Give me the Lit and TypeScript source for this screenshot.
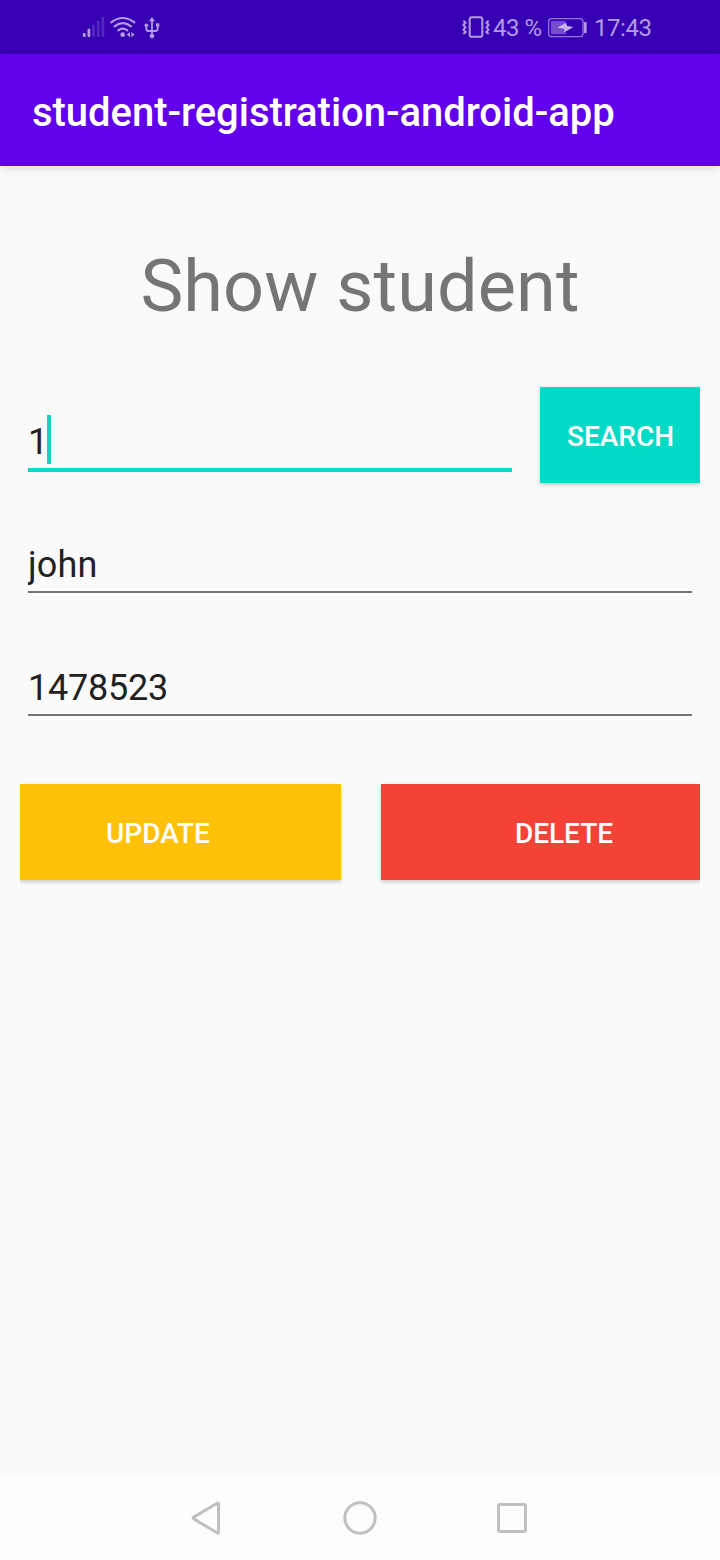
import { LitElement, html, css, svg } from "lit";
import { customElement, property, state } from "lit/decorators.js";
import { classMap } from "lit/directives/class-map.js";

@customElement("status-bar")
class StatusBar extends LitElement {
  static styles = css`
    :host {
      display: flex;
      justify-content: space-between;
      align-items: center;
      height: 54px;
      box-sizing: border-box;
      padding: 2px 68px 0 75px;
      background: #3700b3;
      color: #b49ae3;
      font-size: 24px;
      line-height: 54px;
      letter-spacing: -0.45px;
    }
    svg {
      display: block;
      flex: none;
    }
    .right {
      display: flex;
      align-items: center;
    }
    .percent {
      width: 55px;
      white-space: nowrap;
    }
    .time {
      width: 58px;
      white-space: nowrap;
    }
  `;

  render() {
    return html`
      <svg width="95" height="40" viewBox="0 0 285 120" fill="none">
        <g fill="#b49ae3">
          <rect x="23.500" y="75" width="8.500" height="12" rx="3" />
          <rect x="37.500" y="62" width="8.500" height="25" rx="3" />
          <g opacity="0.25">
            <rect x="51.500" y="50" width="8.500" height="37" rx="3" />
            <rect x="65.500" y="38" width="8.500" height="49" rx="3" />
            <rect x="79.500" y="26" width="8.500" height="61" rx="3" />
          </g>
          <circle cx="143" cy="80" r="7" />
          <path d="M165 72v16l-10-8zM169 72v16l10-8z" />
        </g>
        <g stroke="#b49ae3" stroke-width="6.500" stroke-linecap="round">
          <path d="M109 43Q143 17 178 43M119 55Q143 36 168 55M130 67Q143 57 157 67" />
        </g>
        <g stroke="#b49ae3" stroke-width="5.500" stroke-linejoin="round">
          <path d="M231 36V84M214 53V62Q214 69 221 69H241Q248 69 248 62V53" />
        </g>
        <g fill="#b49ae3">
          <path d="M231 27l9 13h-18z" />
          <circle cx="214" cy="52" r="5.500" />
          <rect x="243" y="46" width="10" height="10" />
          <circle cx="231" cy="84" r="7" />
        </g>
      </svg>
      <div class="right">
        <svg width="33" height="40" viewBox="0 0 99 120" fill="none" stroke="#b49ae3">
          <rect x="29" y="28" width="38" height="58" rx="6" stroke-width="6" />
          <path
            stroke-width="6"
            stroke-linejoin="round"
            d="M10 38l7 6-7 7 7 7-7 7 7 7-7 6M86 38l-7 6 7 7-7 7 7 7-7 7 7 6"
          />
        </svg>
        <span class="percent">43 %</span>
        <svg width="46" height="40" viewBox="0 0 138 120" fill="none">
          <rect x="2" y="32" width="103" height="54" rx="9" stroke="#b49ae3" stroke-width="4" opacity="0.75" />
          <rect x="9" y="39" width="44" height="40" fill="#b49ae3" opacity="0.5" />
          <path d="M54 44L57 54 76 57 49 73 49 62 28 59z" fill="#c9b5ee" />
          <rect x="108" y="42" width="8" height="34" rx="3" fill="#b49ae3" />
        </svg>
        <span class="time">17:43</span>
      </div>
    `;
  }
}

@customElement("text-field")
class TextField extends LitElement {
  @property() value = "";
  @property({ type: Boolean }) active = false;

  static styles = css`
    :host {
      display: block;
    }
    .field {
      display: flex;
      align-items: center;
      box-sizing: border-box;
      height: 52px;
      padding-bottom: 2px;
      border-bottom: 2px solid #747474;
      overflow: hidden;
      color: #212121;
      font-size: 36px;
      line-height: 48px;
    }
    .field.active {
      height: 57px;
      padding-bottom: 0;
      border-bottom: 4px solid #0bd8c5;
    }
    .caret {
      width: 4px;
      height: 49px;
      margin-left: -1px;
      margin-bottom: 4px;
      background: #1ccfbe;
    }
  `;

  render() {
    return html`<div class=${classMap({ field: true, active: this.active })}>
      <span>${this.value}</span>${this.active ? html`<span class="caret"></span>` : ""}
    </div>`;
  }
}

@customElement("nav-bar")
class NavBar extends LitElement {
  static styles = css`
    :host {
      display: flex;
      justify-content: center;
      align-items: center;
      gap: 112px;
      height: 84px;
      background: #fdfdfd;
    }
    svg {
      display: block;
    }
  `;

  private icon(shape: unknown) {
    return html`<svg width="40" height="40" fill="none" stroke="#c0c0c0" stroke-width="3" stroke-linejoin="round">
      ${shape}
    </svg>`;
  }

  render() {
    return html`
      ${this.icon(svg`<path d="M5.700 19.100Q4.500 20 5.700 20.900L29.500 35Q30.500 35.500 30.500 34V6Q30.500 4.500 29.500 5z" transform="translate(0 0)" />`)}
      ${this.icon(svg`<circle cx="20" cy="20" r="15.200" />`)}
      ${this.icon(svg`<rect x="6.500" y="6.500" width="27" height="27" rx="1.500" />`)}
    `;
  }
}

@customElement("app-root")
class AppRoot extends LitElement {
  @state() private studentId = "1";
  @state() private name = "john";
  @state() private phone = "1478523";

  static styles = css`
    :host {
      display: flex;
      flex-direction: column;
      height: 1560px;
      background: #fafafa;
      font-family: Roboto, sans-serif;
    }
    .appbar {
      height: 112px;
      box-sizing: border-box;
      padding: 4px 32px 0;
      background: #6200ee;
      color: #fff;
      font-size: 40px;
      font-weight: 500;
      line-height: 109px;
      letter-spacing: -0.04px;
      white-space: nowrap;
      box-shadow: 0 2px 8px rgba(0, 0, 0, 0.13);
    }
    main {
      flex: 1;
      padding: 0 20px;
    }
    h1 {
      margin: 73px 0 0;
      height: 96px;
      line-height: 96px;
      color: #757575;
      font-size: 72px;
      font-weight: 400;
      letter-spacing: 0.1px;
      text-align: center;
      white-space: nowrap;
    }
    .row {
      display: flex;
      clip-path: inset(-10px 0 -16px 0);
    }
    .search {
      margin-top: 52px;
      gap: 20px;
    }
    .search text-field {
      width: 484px;
      margin: 28px 8px 0;
    }
    .name {
      margin: 58px 8px 0;
      letter-spacing: 0.2px;
    }
    .phone {
      margin: 71px 8px 0;
      letter-spacing: -0.25px;
    }
    .actions {
      margin-top: 68px;
      gap: 40px;
    }
    button {
      height: 96px;
      margin: 0;
      border: 0;
      padding: 3px 0 0;
      color: #fff;
      font: 500 28px/33px Roboto, sans-serif;
      box-shadow: 0 2px 4px rgba(0, 0, 0, 0.2);
    }
    .find {
      width: 160px;
      padding-left: 1px;
      background: #03dac5;
    }
    .update {
      width: 321px;
      padding-right: 45px;
      background: #ffc107;
    }
    .delete {
      width: 319px;
      padding-left: 47px;
      background: #f44336;
    }
  `;

  render() {
    return html`
      <status-bar></status-bar>
      <div class="appbar">student-registration-android-app</div>
      <main>
        <h1>Show student</h1>
        <div class="row search">
          <text-field .value=${this.studentId} active></text-field>
          <button class="find">SEARCH</button>
        </div>
        <text-field class="name" .value=${this.name}></text-field>
        <text-field class="phone" .value=${this.phone}></text-field>
        <div class="row actions">
          <button class="update">UPDATE</button>
          <button class="delete">DELETE</button>
        </div>
      </main>
      <nav-bar></nav-bar>
    `;
  }
}
